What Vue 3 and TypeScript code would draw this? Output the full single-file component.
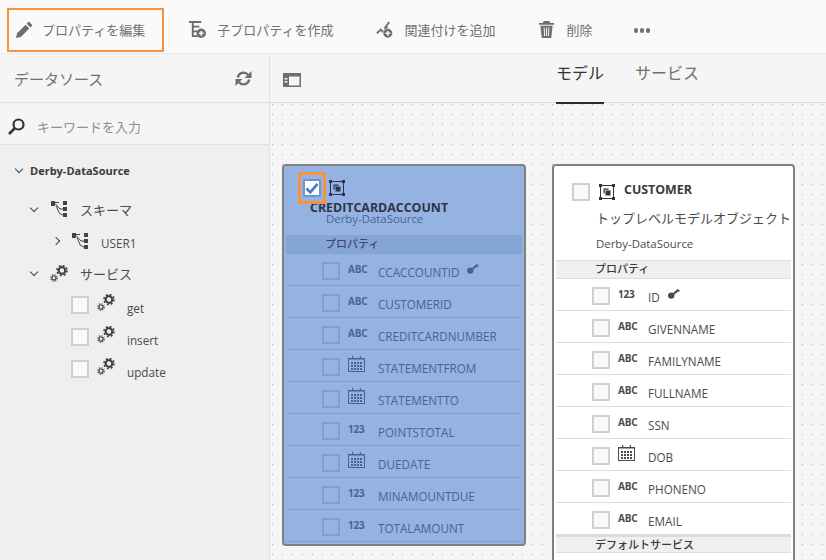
<script setup lang="ts">
type FieldType = 'abc' | 'num' | 'date'
interface Field {
  name: string
  type: FieldType
  key?: boolean
}

const actions = [
  { label: 'プロパティを編集', icon: 'i-pencil', active: true },
  { label: '子プロパティを作成', icon: 'i-child' },
  { label: '関連付けを追加', icon: 'i-link' },
  { label: '削除', icon: 'i-trash' },
]

const services = ['get', 'insert', 'update']

const accountFields: Field[] = [
  { name: 'CCACCOUNTID', type: 'abc', key: true },
  { name: 'CUSTOMERID', type: 'abc' },
  { name: 'CREDITCARDNUMBER', type: 'abc' },
  { name: 'STATEMENTFROM', type: 'date' },
  { name: 'STATEMENTTO', type: 'date' },
  { name: 'POINTSTOTAL', type: 'num' },
  { name: 'DUEDATE', type: 'date' },
  { name: 'MINAMOUNTDUE', type: 'num' },
  { name: 'TOTALAMOUNT', type: 'num' },
]

const customerFields: Field[] = [
  { name: 'ID', type: 'num', key: true },
  { name: 'GIVENNAME', type: 'abc' },
  { name: 'FAMILYNAME', type: 'abc' },
  { name: 'FULLNAME', type: 'abc' },
  { name: 'SSN', type: 'abc' },
  { name: 'DOB', type: 'date' },
  { name: 'PHONENO', type: 'abc' },
  { name: 'EMAIL', type: 'abc' },
]

const typeLabel = (t: FieldType) => (t === 'abc' ? 'ABC' : '123')
</script>

<template>
  <div class="page">
    <svg class="defs" width="0" height="0">
      <defs>
        <symbol id="i-pencil" viewBox="0 0 16 16">
          <path d="M12 .5l3.500 3.500-2 2L10 2.500zM9 3.500L12.500 7l-8 8L0 16l1-4.500z" fill="currentColor" />
        </symbol>
        <symbol id="i-child" viewBox="0 0 18 18">
          <path d="M0 0h13v2H0zM3 2h2v13h5v2H3zM5 5h6v2H5zM5 10h4v2H5z" fill="currentColor" />
          <circle cx="13" cy="13" r="5" fill="currentColor" />
          <path d="M12.200 10.500h1.600v1.700h1.700v1.600h-1.700v1.700h-1.600v-1.700h-1.700v-1.600h1.700z" fill="#fafafa" />
        </symbol>
        <symbol id="i-link" viewBox="0 0 18 18">
          <path d="M1 13l4-4 3 3 4-6M9 8l5-7" fill="none" stroke="currentColor" stroke-width="2" />
          <circle cx="12.500" cy="13" r="5" fill="currentColor" stroke="#fafafa" stroke-width="0.600" />
          <path d="M11.700 10.500h1.600v1.700H15v1.600h-1.700v1.700h-1.600v-1.700H10v-1.600h1.700z" fill="#fafafa" />
        </symbol>
        <symbol id="i-trash" viewBox="0 0 16 18">
          <path d="M5 0h6l1 2h4v2H0V2h4zM1.500 5h13L13 18H3zM5 7l.5 9h1L6 7zM7.500 7v9h1V7zM10 7l-.5 9h1l.5-9z" fill="currentColor" fill-rule="evenodd" />
        </symbol>
        <symbol id="i-refresh" viewBox="0 0 16 16">
          <path d="M2.600 7A5.500 5.500 0 0 1 12.200 4.400M13.400 9A5.500 5.500 0 0 1 3.800 11.600" fill="none" stroke="currentColor" stroke-width="2.200" />
          <path d="M15.500 1v6.500H9zM.5 15V8.500H7z" fill="currentColor" />
        </symbol>
        <symbol id="i-panel" viewBox="0 0 18 14">
          <path d="M0 0h18v14H0zM6 3.500v9h10.500v-9zM1.500 5v1.500h3V5zM1.500 8v1.500h3V8z" fill="currentColor" fill-rule="evenodd" />
        </symbol>
        <symbol id="i-search" viewBox="0 0 17 17">
          <circle cx="10.500" cy="6.500" r="5" fill="none" stroke="currentColor" stroke-width="2.200" />
          <path d="M7 10l-6 6" stroke="currentColor" stroke-width="2.600" />
        </symbol>
        <symbol id="i-schema" viewBox="0 0 16 16">
          <path d="M0 0h4v5H0zM12 0h4v4h-4zM12 6h4v4h-4zM12 12h4v4h-4z" fill="currentColor" />
          <path d="M4 1.500h4M4 2.500L9 8h3M5 5l3.500 7.500L12 14" fill="none" stroke="currentColor" stroke-width="1" />
        </symbol>
        <symbol id="i-gears" viewBox="0 0 18 17">
          <circle cx="12" cy="5.500" r="3.300" fill="none" stroke="currentColor" stroke-width="2.200" />
          <circle cx="12" cy="5.500" r="5" fill="none" stroke="currentColor" stroke-width="1.600" stroke-dasharray="2 1.930" />
          <circle cx="4" cy="13" r="2" fill="none" stroke="currentColor" stroke-width="1.200" />
          <circle cx="4" cy="13" r="3.200" fill="none" stroke="currentColor" stroke-width="1.200" stroke-dasharray="1.300 1.210" />
        </symbol>
        <symbol id="i-model" viewBox="0 0 16 16">
          <path d="M1.500 1.500h13v13h-13z" fill="none" stroke="currentColor" stroke-width="1" />
          <path d="M0 0h3v3H0zM13 0h3v3h-3zM0 13h3v3H0zM13 13h3v3h-3z" fill="currentColor" />
          <path d="M4.500 4.500h5v1.200H5.700v3.800H4.500z" fill="currentColor" />
          <path d="M6.500 6.500h5v5h-5z" fill="currentColor" />
        </symbol>
        <symbol id="i-date" viewBox="0 0 17 16">
          <path d="M4 0h1.200v2H11.800V0H13v2h4v14H0V2h4zM1 3.500V15h15V3.500z" fill="currentColor" fill-rule="evenodd" />
          <path d="M3 6h2v2H3zM6 6h2v2H6zM9 6h2v2H9zM12 6h2v2h-2zM3 9h2v2H3zM6 9h2v2H6zM9 9h2v2H9zM12 9h2v2h-2zM3 12h2v2H3zM6 12h2v2H6zM9 12h2v2H9zM12 12h2v2h-2z" fill="currentColor" />
        </symbol>
        <symbol id="i-key" viewBox="0 0 12 11">
          <circle cx="3.200" cy="7.600" r="3.200" fill="currentColor" />
          <path d="M4 6l5.500-5 2.500 1.500-1.500 1.500-1-.5-.5 1.500-1.500.2L5.500 8z" fill="currentColor" />
        </symbol>
        <symbol id="i-check" viewBox="0 0 14 12">
          <path d="M1.500 6.500l3.800 3.800L12.500 1.800" fill="none" stroke="currentColor" stroke-width="2.600" />
        </symbol>
      </defs>
    </svg>

    <header class="toolbar">
      <button
        v-for="a in actions"
        :key="a.label"
        class="action"
        :class="{ active: a.active }"
      >
        <svg class="action-icon"><use :href="`#${a.icon}`" /></svg>
        <span>{{ a.label }}</span>
      </button>
      <span class="more"><i /><i /><i /></span>
    </header>

    <div class="main">
      <aside class="side">
        <div class="side-head">
          <span>データソース</span>
          <svg class="refresh"><use href="#i-refresh" /></svg>
        </div>
        <div class="search">
          <svg class="search-icon"><use href="#i-search" /></svg>
          <span>キーワードを入力</span>
        </div>
        <div class="tree">
          <div class="tree-root"><span class="chev down" />Derby-DataSource</div>
          <div class="tree-group">
            <span class="chev down" />
            <svg class="tree-icon"><use href="#i-schema" /></svg>
            <span>スキーマ</span>
          </div>
          <div class="tree-user">
            <span class="chev right" />
            <svg class="tree-icon"><use href="#i-schema" /></svg>
            <span class="user-name">USER1</span>
          </div>
          <div class="tree-group services">
            <span class="chev down" />
            <svg class="tree-icon gear"><use href="#i-gears" /></svg>
            <span>サービス</span>
          </div>
          <div v-for="s in services" :key="s" class="tree-service">
            <span class="box" />
            <svg class="tree-icon gear"><use href="#i-gears" /></svg>
            <span class="service-name">{{ s }}</span>
          </div>
        </div>
      </aside>

      <section class="content">
        <div class="tabs-bar">
          <svg class="panel-icon"><use href="#i-panel" /></svg>
          <div class="tabs">
            <span class="tab on">モデル</span>
            <span class="tab">サービス</span>
          </div>
        </div>

        <div class="canvas">
          <article class="card selected">
            <span class="grip" />
            <div class="card-top">
              <span class="check-wrap">
                <span class="box checked"><svg class="check"><use href="#i-check" /></svg></span>
              </span>
              <svg class="model-icon"><use href="#i-model" /></svg>
            </div>
            <div class="sel-title">CREDITCARDACCOUNT</div>
            <div class="sel-sub">Derby-DataSource</div>
            <div class="section">プロパティ</div>
            <div v-for="f in accountFields" :key="f.name" class="row">
              <span class="box" />
              <svg v-if="f.type === 'date'" class="date"><use href="#i-date" /></svg>
              <span v-else class="type">{{ typeLabel(f.type) }}</span>
              <span class="name">{{ f.name }}</span>
              <svg v-if="f.key" class="key"><use href="#i-key" /></svg>
            </div>
          </article>

          <article class="card customer">
            <span class="grip" />
            <div class="card-top plain">
              <span class="box" />
              <svg class="model-icon"><use href="#i-model" /></svg>
              <span class="title">CUSTOMER</span>
            </div>
            <div class="desc">トップレベルモデルオブジェクト</div>
            <div class="source">Derby-DataSource</div>
            <div class="section">プロパティ</div>
            <div v-for="f in customerFields" :key="f.name" class="row">
              <span class="box" />
              <svg v-if="f.type === 'date'" class="date"><use href="#i-date" /></svg>
              <span v-else class="type">{{ typeLabel(f.type) }}</span>
              <span class="name">{{ f.name }}</span>
              <svg v-if="f.key" class="key"><use href="#i-key" /></svg>
            </div>
            <div class="section last">デフォルトサービス</div>
          </article>
        </div>
      </section>
    </div>
  </div>
</template>

<style>
html,
body {
  margin: 0;
  height: 560px;
  overflow: hidden;
}
</style>

<style scoped>
.page {
  width: 826px;
  height: 560px;
  overflow: hidden;
  display: flex;
  flex-direction: column;
  background: #fafafa;
  font-family: "Open Sans", "Noto Sans CJK JP", sans-serif;
  color: #4b4b4b;
  font-size: 12px;
}

.defs {
  position: absolute;
}

.toolbar {
  height: 54px;
  flex-shrink: 0;
  box-sizing: border-box;
  border-bottom: 1px solid #e8e8e8;
  display: flex;
  align-items: flex-start;
  padding: 8px 0 0 7px;
}

.action {
  height: 44px;
  box-sizing: border-box;
  border: 2px solid transparent;
  background: none;
  padding: 0 0 2px 7px;
  margin-right: 32px;
  display: flex;
  align-items: center;
  font: inherit;
  font-size: 13px;
  color: #707070;
}

.action.active {
  border-color: #f5943c;
  padding-right: 17px;
  margin-right: 16px;
}

.action-icon {
  width: 17px;
  height: 17px;
  color: #6e6e6e;
  margin-right: 11px;
}

.action.active .action-icon {
  margin-right: 9px;
}

.more {
  display: flex;
  gap: 1.500px;
  margin: 20px 0 0 7px;
}

.more i {
  width: 4.500px;
  height: 4.500px;
  border-radius: 50%;
  background: #707070;
}

.main {
  flex: 1;
  min-height: 0;
  display: flex;
}

.side {
  width: 270px;
  flex-shrink: 0;
  box-sizing: border-box;
  border-right: 1px solid #e0e0e0;
  background: #efefef;
  display: flex;
  flex-direction: column;
}

.side-head {
  height: 49px;
  box-sizing: border-box;
  background: #f5f5f5;
  border-bottom: 1px solid #e0e0e0;
  display: flex;
  align-items: center;
  justify-content: space-between;
  padding: 0 17px 0 14px;
  font-size: 15px;
  color: #707070;
}

.refresh {
  width: 17px;
  height: 17px;
  color: #6e6e6e;
}

.search {
  height: 42px;
  box-sizing: border-box;
  background: #f5f5f5;
  border-bottom: 1px solid #e0e0e0;
  display: flex;
  align-items: center;
  padding: 6px 0 0 8px;
  font-size: 13px;
  color: #8e8e8e;
}

.search-icon {
  width: 17px;
  height: 17px;
  color: #333;
  margin-right: 12px;
}

.tree {
  padding-top: 14px;
}

.tree-root {
  height: 22px;
  display: flex;
  align-items: center;
  padding-left: 16px;
  font-weight: 700;
  font-size: 11px;
  color: #3a3a3a;
}

.chev {
  width: 6px;
  height: 6px;
  box-sizing: border-box;
  border-right: 1.500px solid #444;
  border-bottom: 1.500px solid #444;
  flex-shrink: 0;
}

.chev.down {
  transform: rotate(45deg);
  margin: -3px 8px 0 0;
}

.chev.right {
  transform: rotate(-45deg);
  margin-right: 13px;
}

.tree-icon {
  width: 16px;
  height: 16px;
  color: #444;
  flex-shrink: 0;
}

.tree-icon.gear {
  width: 18px;
  height: 17px;
}

.tree-group {
  margin-top: 17px;
  height: 22px;
  display: flex;
  align-items: center;
  padding-left: 31px;
  font-size: 13px;
  color: #4b4b4b;
}

.tree-group .tree-icon {
  margin: 0 13px 0 6px;
}

.tree-group .tree-icon.gear {
  margin: 0 12px 0 5px;
}

.tree-user {
  margin-top: 10px;
  height: 22px;
  display: flex;
  align-items: center;
  padding-left: 53px;
  font-size: 11.700px;
}

.tree-user .tree-icon {
  margin-right: 13px;
}

.user-name {
  margin-top: 3px;
}

.tree-group.services {
  margin: 10px 0 5px;
}

.tree-service {
  height: 32px;
  display: flex;
  align-items: center;
  padding-left: 71px;
  font-size: 11.700px;
}

.tree-service .tree-icon.gear {
  margin: -5px 12px 0 8px;
}

.service-name {
  margin-top: 6px;
}

.box {
  width: 18px;
  height: 18px;
  box-sizing: border-box;
  border: 2px solid #cfcfcf;
  background: #fafafa;
  flex-shrink: 0;
  display: inline-flex;
  align-items: center;
  justify-content: center;
}

.content {
  flex: 1;
  min-width: 0;
  display: flex;
  flex-direction: column;
}

.tabs-bar {
  height: 49px;
  flex-shrink: 0;
  box-sizing: border-box;
  background: #f5f5f5;
  border-bottom: 1px solid #d8d8d8;
  display: flex;
  align-items: flex-start;
  padding-left: 13px;
}

.panel-icon {
  width: 18px;
  height: 14px;
  color: #6e6e6e;
  margin-top: 19px;
}

.tabs {
  display: flex;
  gap: 31px;
  margin-left: 255px;
}

.tab {
  position: relative;
  z-index: 1;
  height: 50px;
  box-sizing: border-box;
  padding-top: 6px;
  font-size: 16px;
  color: #707070;
}

.tab.on {
  color: #333;
  border-bottom: 2px solid #2c2c2c;
}

.canvas {
  flex: 1;
  min-height: 0;
  background-color: #f5f5f5;
  background-image: conic-gradient(from 90deg at 1px 1px, #f5f5f5 50%, #b0b0b0 50% 75%, #f5f5f5 75%);
  background-position: 2px 1px;
  background-size: 10px 10px;
  display: flex;
  align-items: flex-start;
  gap: 26px;
  padding: 61px 0 0 12px;
}

.card {
  position: relative;
  width: 244px;
  flex-shrink: 0;
  box-sizing: border-box;
  border: 2px solid #808080;
  border-radius: 4px;
  background: #fff;
  padding: 0 2px;
}

.card.customer {
  width: 243px;
  padding-bottom: 30px;
}

.grip {
  position: absolute;
  top: 13px;
  right: 14px;
  width: 5px;
  height: 14px;
  background-image: radial-gradient(circle at 1px 1px, #666 0.6px, transparent 0.7px);
  background-size: 3px 3px;
}

.card-top {
  display: flex;
  align-items: center;
  padding: 6px 0 0 12px;
}

.card-top.plain {
  height: 36px;
  box-sizing: border-box;
  padding: 16px 0 0 16px;
}

.model-icon {
  width: 16px;
  height: 16px;
  color: #333;
  margin: 0 0 0 9px;
}

.title {
  margin: -6px 0 0 9px;
  font-weight: 700;
  font-size: 12.400px;
  color: #3a3a3a;
}

.desc {
  margin-top: 3px;
  height: 26px;
  line-height: 26px;
  padding-left: 40px;
  font-size: 13px;
  white-space: nowrap;
  overflow: hidden;
  color: #4b4b4b;
}

.source {
  height: 26px;
  line-height: 26px;
  padding-left: 40px;
  font-size: 11.400px;
  color: #4b4b4b;
  margin-bottom: 3px;
}

.section {
  height: 19px;
  box-sizing: border-box;
  border-top: 1px solid #dcdcdc;
  border-bottom: 1px solid #dcdcdc;
  background: #efefef;
  padding-left: 39px;
  line-height: 16px;
  font-size: 11px;
  font-weight: 500;
  color: #3a3a3a;
}

.section.last {
  height: 18px;
  border-top-width: 2px;
  line-height: 15px;
}

.row {
  height: 32px;
  box-sizing: border-box;
  border-bottom: 1px solid #dcdcdc;
  display: flex;
  align-items: center;
  padding-left: 36px;
  font-size: 11.700px;
}

.row .box {
  margin-top: 2px;
}

.type {
  width: 18px;
  margin-left: 8px;
  margin-top: -2px;
  font-size: 10px;
  font-weight: 700;
  letter-spacing: -0.200px;
}

.date {
  width: 17px;
  height: 16px;
  margin: -4px 1px 0 8px;
}

.name {
  margin-left: 12px;
  margin-top: 5px;
}

.key {
  width: 12px;
  height: 11px;
  margin: -2px 0 0 8px;
}

.selected {
  height: 382px;
  background: #94b3e3;
  color: #4c6193;
}

.selected .box {
  background: transparent;
  border-color: #7f9fd0;
}

.selected .model-icon {
  color: #2f3550;
  margin-left: 3px;
}

.selected .grip {
  background-image: radial-gradient(circle at 1px 1px, #5a6f9c 0.6px, transparent 0.7px);
}

.check-wrap {
  position: relative;
  z-index: 1;
  box-sizing: border-box;
  width: 28px;
  height: 32px;
  border: 3px solid #f5943c;
  display: inline-flex;
  align-items: center;
  justify-content: center;
}

.selected .box.checked {
  background: #fff;
  border-color: #6d93d3;
}

.check {
  width: 14px;
  height: 12px;
  color: #3f78c9;
}

.sel-title {
  margin-top: -3px;
  padding-left: 24px;
  height: 14px;
  line-height: 14px;
  font-weight: 700;
  font-size: 12.400px;
  color: #2f3344;
}

.sel-sub {
  margin-top: -2px;
  height: 12px;
  line-height: 12px;
  padding-left: 40px;
  font-size: 11.400px;
  color: #4c6193;
  margin-bottom: 10px;
}

.selected .section {
  background: #86a5d7;
  border-color: #86a5d7;
  color: #3d4a6f;
}

.selected .row {
  border-bottom: 1px solid #7f9fd0;
}
</style>
